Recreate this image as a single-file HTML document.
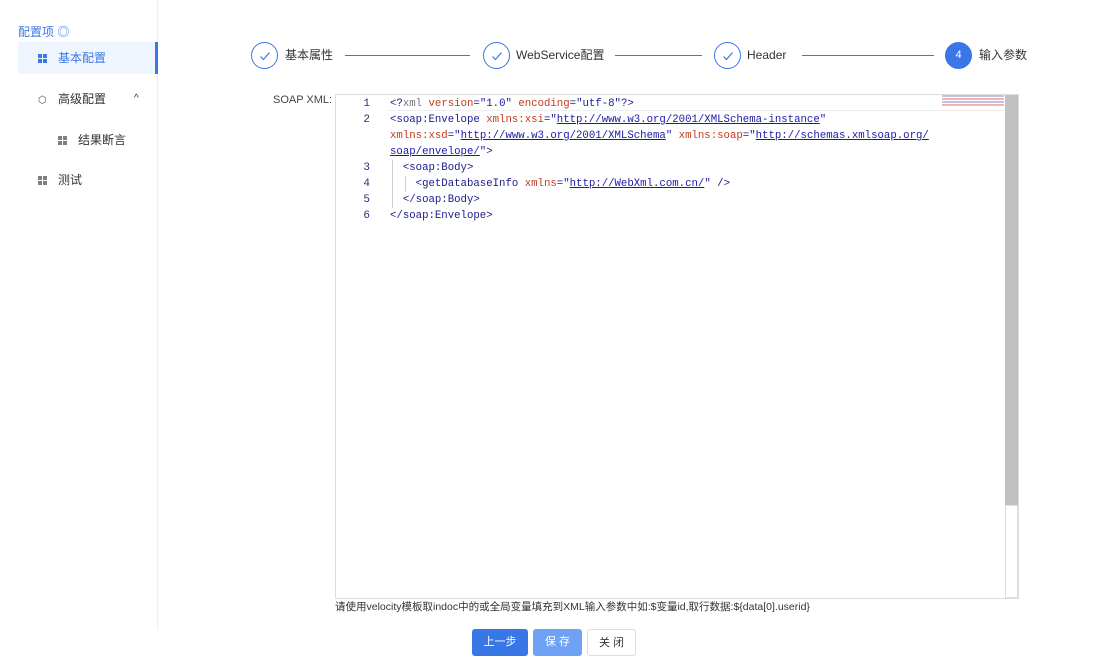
<!DOCTYPE html>
<html><head><meta charset="utf-8"><style>
*{margin:0;padding:0;box-sizing:border-box}
body{width:1098px;height:659px;background:#fff;font-family:"Liberation Sans","Noto Sans CJK SC",sans-serif;font-size:12px;color:#333;position:relative;overflow:hidden}
.abs{position:absolute}
.side{left:0;top:0;width:158px;height:630px;border-right:1px solid #eee}
.item{position:absolute;left:18px;width:140px;height:32px;line-height:32px;font-size:12px;color:#333}
.ic{display:inline-block;width:9px;height:9px;vertical-align:middle;margin-right:11px;background:
linear-gradient(#555,#555) 0 0/4px 4px no-repeat,linear-gradient(#555,#555) 5px 0/4px 4px no-repeat,linear-gradient(#555,#555) 0 5px/4px 4px no-repeat,linear-gradient(#555,#555) 5px 5px/4px 4px no-repeat;opacity:.75}
.circ{width:27px;height:27px;border-radius:50%;border:1px solid #3a77e6;color:#3a77e6;text-align:center;line-height:25px;font-size:13px}
.circ svg{position:absolute;left:7px;top:7px}
.st{font-size:12px;color:#333;line-height:14px}
.ln{height:1px;background:#3a77e6;top:55px}
.code{font-family:"Liberation Mono","DejaVu Sans Mono",monospace;font-size:10.7px;line-height:16px;white-space:pre;color:#1a1a8a}
.t{color:#1a1a8a}.a{color:#c43a1a}.s{color:#1a1aa6;text-decoration:underline}.q{color:#777}.v{color:#1a1aa6}
.nums div{height:16px}
.btn{height:27px;line-height:27px;text-align:center;border-radius:3px;font-size:11px}
</style></head><body>
<div class="abs side"></div>
<div class="abs" style="left:18px;top:23px;color:#3a77e6;font-size:12px">配置项 ◎</div>
<div class="item" style="top:42px;background:#f0f6ff;color:#3a77e6;padding-left:20px;border-right:3px solid #3a77e6"><span class="ic" style="opacity:1;background:linear-gradient(#3a77e6,#3a77e6) 0 0/4px 4px no-repeat,linear-gradient(#3a77e6,#3a77e6) 5px 0/4px 4px no-repeat,linear-gradient(#3a77e6,#3a77e6) 0 5px/4px 4px no-repeat,linear-gradient(#3a77e6,#3a77e6) 5px 5px/4px 4px no-repeat"></span>基本配置</div>
<div class="item" style="top:83px;padding-left:20px"><span style="display:inline-block;width:10px;margin-right:10px;font-size:10px;color:#555">⬡</span>高级配置<span style="position:absolute;left:116px;font-size:10px">^</span></div>
<div class="item" style="top:124px;padding-left:40px"><span class="ic"></span>结果断言</div>
<div class="item" style="top:164px;padding-left:20px"><span class="ic"></span>测试</div>

<div class="abs circ" style="left:251px;top:42px"><svg width="12" height="12" viewBox="0 0 12 12"><path d="M1.5 6.5L4.5 9.5L10.5 2.5" fill="none" stroke="#3a77e6" stroke-width="1.2"/></svg></div>
<div class="abs st" style="left:285px;top:48px">基本属性</div>
<div class="abs ln" style="left:345px;width:125px"></div>
<div class="abs circ" style="left:483px;top:42px"><svg width="12" height="12" viewBox="0 0 12 12"><path d="M1.5 6.5L4.5 9.5L10.5 2.5" fill="none" stroke="#3a77e6" stroke-width="1.2"/></svg></div>
<div class="abs st" style="left:516px;top:48px">WebService配置</div>
<div class="abs ln" style="left:615px;width:87px"></div>
<div class="abs circ" style="left:714px;top:42px"><svg width="12" height="12" viewBox="0 0 12 12"><path d="M1.5 6.5L4.5 9.5L10.5 2.5" fill="none" stroke="#3a77e6" stroke-width="1.2"/></svg></div>
<div class="abs st" style="left:747px;top:48px">Header</div>
<div class="abs ln" style="left:802px;width:132px"></div>
<div class="abs circ" style="left:945px;top:42px;background:#3a77e6;color:#fff;font-size:11px">4</div>
<div class="abs st" style="left:979px;top:48px">输入参数</div>

<div class="abs" style="left:273px;top:94px;font-size:11px;color:#444">SOAP XML:</div>
<div class="abs" style="left:335px;top:94px;width:684px;height:505px;border:1px solid #ddd;background:#fff"></div>
<div class="abs" style="left:388px;top:95px;width:617px;height:16px;border-bottom:1px solid #eee"></div>
<div class="abs" style="left:1005px;top:95px;width:13px;height:410px;background:#c1c1c1"></div>
<div class="abs" style="left:1005px;top:505px;width:13px;height:93px;border:1px solid #ddd"></div>
<div class="abs nums" style="left:355px;top:96px;width:15px;text-align:right;font-family:'Liberation Mono',monospace;font-size:11px;line-height:16px;color:#237">
<div>1</div><div>2</div><div></div><div></div><div>3</div><div>4</div><div>5</div><div>6</div></div>
<div class="abs" style="left:392px;top:160px;width:1px;height:48px;background:#ccc"></div>
<div class="abs" style="left:405px;top:176px;width:1px;height:16px;background:#ccc"></div>
<div class="abs code" style="left:390px;top:96px"><span class="t">&lt;?</span><span class="q">xml</span> <span class="a">version</span>=<span class="v">"1.0"</span> <span class="a">encoding</span>=<span class="v">"utf-8"</span><span class="t">?&gt;</span>
<span class="t">&lt;soap:Envelope</span> <span class="a">xmlns:xsi</span>=<span class="v">"</span><span class="s">http://www.w3.org/2001/XMLSchema-instance</span><span class="v">"</span>
<span class="a">xmlns:xsd</span>=<span class="v">"</span><span class="s">http://www.w3.org/2001/XMLSchema</span><span class="v">"</span> <span class="a">xmlns:soap</span>=<span class="v">"</span><span class="s">http://schemas.xmlsoap.org/</span>
<span class="s">soap/envelope/</span><span class="v">"</span><span class="t">&gt;</span>
  <span class="t">&lt;soap:Body&gt;</span>
    <span class="t">&lt;getDatabaseInfo</span> <span class="a">xmlns</span>=<span class="v">"</span><span class="s">http://WebXml.com.cn/</span><span class="v">"</span> <span class="t">/&gt;</span>
  <span class="t">&lt;/soap:Body&gt;</span>
<span class="t">&lt;/soap:Envelope&gt;</span></div>
<div class="abs" style="left:942px;top:95px;width:62px;height:12px;background:repeating-linear-gradient(#d66 0 1px,#88c 1px 2px,transparent 2px 3px);opacity:.5"></div>
<div class="abs" style="left:335px;top:599px;font-size:10.5px;color:#333">请使用velocity模板取indoc中的或全局变量填充到XML输入参数中如:$变量id,取行数据:${data[0].userid}</div>
<div class="abs btn" style="left:472px;top:629px;width:56px;background:#3a77e6;color:#fff">上一步</div>
<div class="abs btn" style="left:533px;top:629px;width:49px;background:#6fa2f5;color:#fff">保 存</div>
<div class="abs btn" style="left:587px;top:629px;width:49px;border:1px solid #ddd;color:#333">关 闭</div>
</body></html>
